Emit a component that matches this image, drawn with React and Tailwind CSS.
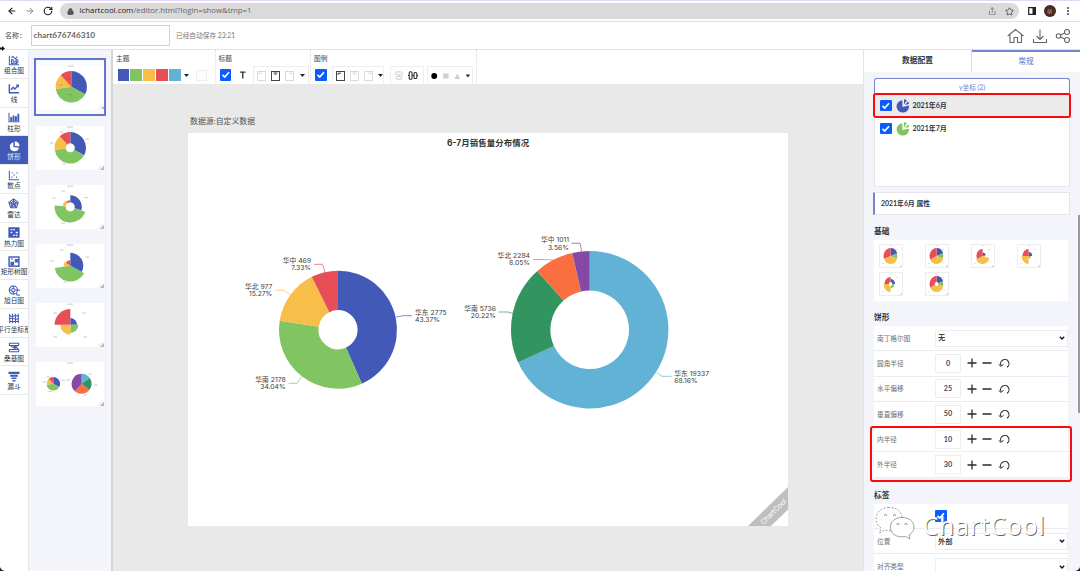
import React from "react";
import { ArrowLeft, ArrowRight, RotateCw, Lock, Star, Share } from "lucide-react";

const BLUE = "#4259b8", GREEN = "#81c563", YELLOW = "#f8be4a", RED = "#e84e55", SKY = "#62b2d6";
const FOREST = "#32945e", ORANGE = "#fa6f42", PURPLE = "#8549a5";

function sector(cx, cy, inner, r, from, to) {
  const p = (rad, a) => {
    const t = ((a - 90) * Math.PI) / 180;
    return (cx + rad * Math.cos(t)).toFixed(2) + " " + (cy + rad * Math.sin(t)).toFixed(2);
  };
  const big = to - from > 180 ? 1 : 0;
  return `M${p(inner, from)}L${p(r, from)}A${r} ${r} 0 ${big} 1 ${p(r, to)}L${p(inner, to)}A${inner} ${inner} 0 ${big} 0 ${p(inner, from)}Z`;
}

/* slices: [end angle, colour, radius] */
function Pie({ cx, cy, inner = 0, slices }) {
  let from = 0;
  return (
    <g>
      {slices.map(([to, color, r], i) => {
        const d = sector(cx, cy, inner, r, from, to);
        from = to;
        return <path key={i} d={d} fill={color} />;
      })}
    </g>
  );
}

const full = [[118, BLUE, 15.7], [262, GREEN, 15.7], [318, YELLOW, 15.7], [360, RED, 15.7]];
const thumbs = [
  { pies: [{ slices: full }], ticks: [[41, 17.5], [33, 29.5], [24, 20], [31, 13.5]] },
  { pies: [{ inner: 4.5, slices: full }], ticks: [[51, 13], [28, 38], [15.5, 17], [25.5, 6]] },
  { pies: [{ inner: 4.5, slices: [[108, BLUE, 11.5], [275, GREEN, 15.7], [325, YELLOW, 7.7], [360, RED, 6.5]] }], ticks: [[50, 12.5], [27, 38], [18, 13], [27, 6]] },
  { pies: [{ slices: [[118, BLUE, 13], [262, GREEN, 15.7], [305, YELLOW, 6.7], [360, RED, 5.5]] }], ticks: [[51, 13], [29, 38], [15.5, 17], [25.5, 6]] },
  { pies: [{ slices: [[90, BLUE, 6.7], [180, GREEN, 8], [270, YELLOW, 10], [360, RED, 15.7]] }], ticks: [[48, 10], [49, 34], [19, 34], [19, 10]] },
  {
    pies: [
      { cx: 17.3, slices: full.map(([a, c]) => [a, c, 6.7]) },
      { cx: 45.6, slices: [[55, SKY, 10], [130, FOREST, 10], [222, ORANGE, 10], [360, PURPLE, 10]] },
    ],
    ticks: [[27, 18], [14, 29.5], [8, 20], [12, 15], [32, 18], [54, 12], [59.5, 23], [49, 33]],
  },
];

function Thumb({ pies, ticks }) {
  return (
    <svg className="block h-11 w-[68px] bg-white" viewBox="0 0 68 44">
      <rect x="31" y="0.6" width="6" height="1" fill="#c9c9c9" />
      {pies.map((p, i) => <Pie key={i} cx={p.cx || 34.3} cy={21.8} inner={p.inner} slices={p.slices} />)}
      {ticks.map(([x, y], i) => <rect key={i} x={x - 1.5} y={y - 0.5} width="3.4" height="1.1" fill="#555" opacity="0.3" />)}
      <path d="M68 40L64 44h4zM66 39.5l-4 4" fill="#bbb" stroke="#bbb" strokeWidth=".5" />
    </svg>
  );
}

const navIcons = {
  combo: <path d="M1.500 1v10.500H13M4 10V5.500h2V10zM8 10V7h2v3zM4 3.500l1.500-2 3 3L11 2M8.500 4.500L11.500 6V10" />,
  line: <path d="M1.500 1.500v10H13M3.500 8L6 5l2 2 4-4M9.500 2.500H12V5" strokeWidth="1.700" />,
  bar: <g fill="currentColor" stroke="none"><path d="M0.500 1h1.200v11H0.500zM0.500 11h13v1.200H.500zM2.600 6h2.200v4.500H2.600zM5.400 4h2.200v6.500H5.400zM8.200 5h2.200v5.500H8.200zM11 2h2.200v8.500H11z" /></g>,
  pie: <g fill="currentColor" stroke="none"><path d="M6.300 1.500a5.400 5.400 0 1 0 6.500 6.500L6.300 7.200zM8 .3v5.500l5.500.5A5.600 5.600 0 0 0 8 .3z" /></g>,
  scatter: <g><path d="M1.500 1v10.500H13" /><path d="M4 8.500h1.300M6.500 6h1.300M9.500 8.500h1.300M10 3.500h1.300M5 3.500h1" strokeWidth="1.400" /></g>,
  radar: <path d="M6.500 1L12 5.200 10 11.500H3L1 5.200zM6.500 3.500L9.800 6 8.500 9.800h-4L3.300 6zM6.500 1v6M12 5.200L6.500 7 10 11.500M1 5.200L6.500 7 3 11.500" />,
  heat: <g><rect x="1" y="1" width="12" height="11" fill="currentColor" /><path d="M3 3.200h2M6 3.200h2M9 6.500h2.500M3 6.500h2M6 9.800h2M9 9.800h2" stroke="white" strokeWidth="1.500" /></g>,
  tree: <g><rect x="1.200" y="1.200" width="11.600" height="10.800" strokeWidth="1.700" /><path d="M3.500 3.500h2.500M8.500 4h3v3h-3zM3.500 7.500h3v3h-3z" fill="currentColor" /></g>,
  sun: <g><circle cx="6.200" cy="6" r="4.800" /><circle cx="6.200" cy="6" r="2" /><path d="M6.200 1v3M1 6h3M6.200 8v3M8.500 6H13M9.500 9.500a3 3 0 1 0 2.500-3.500" /></g>,
  parallel: <path d="M2 1v11M5.300 1v11M8.700 1v11M12 1v11M1 3l4 1 3.500-1L13 4M1 7l4-1 3.500 1.500L13 7M1 10h12" />,
  sankey: <path d="M1.500 1.500h11v2.500H1.500zM1.500 9h11v2.500H1.500zM2 4l8 5M5 4l7 4M12 4L7 6.500" />,
  funnel: <g fill="currentColor" stroke="none"><path d="M0.500 1h13v2.500H.500zM2.500 4.500h9v2.200h-9zM4 7.700h6v1.900H4zM5.300 10.600h3.400v1.900H5.300z" /></g>,
};
const nav = [["combo", "组合图"], ["line", "线"], ["bar", "柱形"], ["pie", "饼形"], ["scatter", "散点"], ["radar", "雷达"], ["heat", "热力图"], ["tree", "矩形树图"], ["sun", "旭日图"], ["parallel", "平行坐标系"], ["sankey", "桑基图"], ["funnel", "漏斗"]];

function Check({ className = "" }) {
  return (
    <span className={"block size-[11.500px] shrink-0 rounded-[1px] bg-[#0b5cff] " + className}>
      <svg viewBox="0 0 12 12" className="block size-full"><path d="M2.600 6.200L4.900 8.500L9.400 3.300" fill="none" stroke="white" strokeWidth="1.700" /></svg>
    </span>
  );
}
const Caret = () => <svg viewBox="0 0 5 3" className="block h-[3px] w-[5px] shrink-0"><path d="M0 0h5L2.500 3z" fill="#1d2b38" /></svg>;
function Pos({ at, on }) {
  return (
    <svg viewBox="0 0 9 10" className="block h-2.5 w-[9px] shrink-0" fill="none" stroke={on ? "#444" : "#dadada"}>
      <rect x=".5" y=".5" width="8" height="9" />
      <path d={at === "c" ? "M2.500 2h4M3.500 3.200h2" : at === "l" ? "M2 4V2.200h3" : "M4 2.200h3V4"} />
    </svg>
  );
}

function Toolbar() {
  const box = "flex h-[18px] items-center border border-b-0 border-[#eeeeee]";
  const group = "flex h-[34px] shrink-0 flex-col border-r border-dotted border-[#dcdcdc]";
  const head = "flex h-4 items-center text-[6.700px] text-[#34424e]";
  return (
    <div className="flex h-[34px] bg-white">
      <div className={group + " w-[103px] pl-[3px]"}>
        <div className={head}>主题</div>
        <div className="flex h-[18px] items-center pl-[1.500px]">
          <div className="flex gap-[1.700px]">
            <i className="size-[11.300px] bg-[#4259b8]" /><i className="size-[11.300px] bg-[#81c563]" /><i className="size-[11.300px] bg-[#f8be4a]" /><i className="size-[11.300px] bg-[#e84e55]" /><i className="size-[11.300px] bg-[#62b2d6]" />
          </div>
          <span className="ml-[3.500px]"><Caret /></span>
          <i className="ml-[7px] size-[11px] border border-[#eeeeee]" />
        </div>
      </div>
      <div className={group + " w-[95px] pl-[2.500px]"}>
        <div className={head}>标题</div>
        <div className="flex h-[18px] items-center pl-[1px]">
          <Check />
          <svg viewBox="0 0 8 8" className="ml-[7.500px] size-[7.500px]"><path d="M1 1.200h6M4 1v7" stroke="#3a3a3a" strokeWidth="1.500" /></svg>
          <div className={box + " ml-[7px] w-[56px] gap-[5.200px] pl-[3px]"}><Pos at="l" /><Pos at="c" on /><Pos at="r" /><Caret /></div>
        </div>
      </div>
      <div className={group + " w-[166px] pl-[3px]"}>
        <div className={head}>图例</div>
        <div className="flex h-[18px] items-center pl-[1px]">
          <Check />
          <div className={box + " ml-[5px] w-[52px] gap-[5.200px] pl-[3px]"}><Pos at="l" on /><Pos at="c" /><Pos at="r" /><Caret /></div>
          <div className={box + " ml-[6px] w-[34px] gap-[5px] pl-[4px]"}>
            <svg viewBox="0 0 8 9" className="h-[9px] w-2" fill="none" stroke="#d0d0d0"><rect x=".5" y="1" width="7" height="2.700" rx="1" /><rect x="1" y="5.500" width="6" height="2.700" rx="1" /><path d="M4 0v1M4 3.700v1.800M4 8v1" /></svg>
            <svg viewBox="0 0 10 9" className="h-[9px] w-2.5" fill="none" stroke="#333" strokeWidth="1.100"><rect x="1.200" y=".8" width="2.800" height="7.400" rx="1" /><rect x="6" y="1.500" width="2.800" height="6" rx="1" /><path d="M0 4.500h1.200M4 4.500h2M8.800 4.500H10" /></svg>
          </div>
          <div className={box + " ml-[3px] w-[46px] pl-[3px]"}>
            <svg viewBox="0 0 42 8" className="h-2 w-[42px]"><circle cx="3.300" cy="4" r="3" fill="#000" /><path d="M12.500 1.500h5.500V6.500h-5.500zM24 7L27 1.500 30 7z" fill="#cfcfcf" /><path d="M35.500 2.500h4.600l-2.300 3z" fill="#1d2b38" /></svg>
          </div>
        </div>
      </div>
    </div>
  );
}

/* name, share, anchor x, anchor y, alignment, leader line, colour */
const labels = [
  ["华中 469", "7.33%", 311, 261, "end", "314,264.300 322.500,264.300 325,272", RED],
  ["华北 977", "15.27%", 272.3, 287, "end", "275.500,290.300 284,290.300 291,295", YELLOW],
  ["华东 2775", "43.37%", 415, 313, "start", "396.500,317 403,315.700 412,315.700", BLUE],
  ["华南 2178", "34.04%", 285.7, 379.7, "end", "288.500,383.300 297,383.300 302,376.500", GREEN],
  ["华中 1011", "3.56%", 569, 240.3, "end", "571.500,243.300 580,243.300 581.500,251", PURPLE],
  ["华北 2284", "8.05%", 530, 256, "end", "533,259.500 544,259.500 554,260", ORANGE],
  ["华南 5736", "20.22%", 496, 309, "end", "498.500,312 508,312 513,313.500", FOREST],
  ["华东 19337", "68.16%", 674.3, 373.5, "start", "656.500,372.500 662,376.300 671.500,376.300", SKY],
];

function Chart() {
  return (
    <svg className="block h-[393px] w-[600px] bg-white font-['Inter','Noto_Sans_CJK_SC',sans-serif]" viewBox="188 133 600 393">
      <text x="488" y="146" textAnchor="middle" fontSize="8.400" fontWeight="700" fill="#333" textLength="82">6-7月销售量分布情况</text>
      <Pie cx={338} cy={329.7} inner={19.6} slices={[[156.1, BLUE, 59], [278.7, GREEN, 59], [333.6, YELLOW, 59], [360, RED, 59]]} />
      <Pie cx={589.7} cy={329.7} inner={39.3} slices={[[245.4, SKY, 78.7], [318.2, FOREST, 78.7], [347.2, ORANGE, 78.7], [360, PURPLE, 78.7]]} />
      {labels.map(([name, pct, x, y, anchor, line, color]) => (
        <g key={name} fontSize="6.800" fill="#3c3c3c" textAnchor={anchor}>
          <polyline points={line} fill="none" stroke={color} strokeWidth=".7" />
          <text x={x} y={y + 2}>{name}</text>
          <text x={x} y={y + 9.2}>{pct}</text>
        </g>
      ))}
      <path d="M748 526L788 487v22.500L771 526z" fill="#bfbfbf" />
      <text transform="translate(763.500 525) rotate(-45)" fontSize="7.200" fill="#fff" textLength="33">ChartCool</text>
    </svg>
  );
}

const basics = [
  { slices: [[70, BLUE, 8], [110, GREEN, 7.5], [250, YELLOW, 8], [360, RED, 8]] },
  { slices: [[70, BLUE, 8], [110, GREEN, 7.5], [245, YELLOW, 8], [360, RED, 8]] },
  { slices: [[80, BLUE, 3.5], [105, GREEN, 2], [245, YELLOW, 8], [360, RED, 7]] },
  { slices: [[90, BLUE, 4], [180, GREEN, 2.500], [270, YELLOW, 8], [360, RED, 7]] },
  { inner: 2, slices: [[90, BLUE, 5], [180, GREEN, 4], [270, YELLOW, 8], [360, RED, 7]] },
  { inner: 2, slices: [[70, BLUE, 8], [110, GREEN, 7.5], [245, YELLOW, 8], [360, RED, 8]] },
];

function Row({ label, children }) {
  return (
    <div className="flex h-[25.300px] shrink-0 items-center border-b border-[#ececf0] bg-white pl-[3px]">
      <div className="w-[58px] shrink-0 text-[6.700px] text-[#6b7075]">{label}</div>
      {children}
    </div>
  );
}
function NumberRow({ label, value }) {
  return (
    <Row label={label}>
      <div className="flex h-[19px] w-[26px] items-center justify-center border border-[#eeeeee] text-[7.200px] font-bold text-[#3b4b5b]">{value}</div>
      <svg viewBox="0 0 44 12" className="ml-[6px] h-3 w-11" fill="none" stroke="#2a2a2a" strokeWidth="1.300">
        <path d="M0.500 6h9M5 1.500v9M15.500 6h9" />
        <path d="M40 10.200A4.200 4.200 0 1 0 34 8.500" strokeWidth="1.100" />
        <path d="M31.700 7.300L33.800 9.300L36.500 7.500" strokeWidth="1" />
      </svg>
    </Row>
  );
}
function SelectRow({ label, value }) {
  return (
    <Row label={label}>
      <div className="flex h-[17px] flex-1 items-center justify-between border border-[#eeeeee] px-[2px] text-[7.300px] font-medium text-[#222]">
        <span>{value}</span>
        <svg viewBox="0 0 6 4" className="h-1 w-1.5" fill="none" stroke="#111" strokeWidth="1.300"><path d="M.8.800L3 3 5.200.800" /></svg>
      </div>
    </Row>
  );
}
function Series({ color, label, active }) {
  return (
    <div className={"flex h-[23px] items-center pl-[6px] " + (active ? "bg-[#ebebeb]" : "")}>
      <Check />
      <svg viewBox="0 0 14 14" className="ml-[4px] size-[14px]">
        <path d="M6.300 1.200A6.200 6.200 0 1 0 12.900 6.500L6.500 8zM8 .300L8 5.500L10.800 1.300A6 6 0 0 0 8 .300zM12 2.200L9 6L13 5A6 6 0 0 0 12 2.200z" fill={color} />
      </svg>
      <span className="ml-[3px] text-[7px] font-bold text-[#26384a]">{label}</span>
    </div>
  );
}
const Heading = ({ children, className }) => <div className={"flex shrink-0 items-center text-[7.700px] font-bold text-[#333] " + className}>{children}</div>;

function SidePanel() {
  return (
    <aside className="relative flex w-[217px] shrink-0 flex-col overflow-hidden border-l border-[#e2e3e6] bg-[#f4f5fa]">
      <div className="flex h-[22px] shrink-0 bg-white text-[7.700px]">
        <div className="flex w-[108px] items-center justify-center border-r border-[#dcdcdc] font-bold text-[#26384a]">数据配置</div>
        <div className="flex flex-1 items-center justify-center border-t-2 border-[#7384cf] text-[#5b6fc5]">常规</div>
      </div>
      <div className="mt-1.5 ml-[10px] h-[109px] w-[196px] shrink-0 rounded-t-[3px] border border-[#e6e6ea] bg-white">
        <div className="-mx-px -mt-px flex h-[17px] items-center justify-center rounded-t-[3px] border border-b-0 border-[#7384cf] text-[6.700px] text-[#6c7dcc]">y坐标 (2)</div>
        <div className="-mx-px -mt-px overflow-hidden rounded-[2px] outline-2 -outline-offset-1 outline-[#fa0b0b]"><Series color={BLUE} label="2021年6月" active /></div>
        <div className="-ml-px"><Series color="#81c563" label="2021年7月" /></div>
      </div>
      <div className="mt-[5px] ml-[9px] flex h-[23px] w-[197px] shrink-0 items-center border border-l-2 border-[#e6e6ea] border-l-[#7384cf] bg-white pl-[6px] text-[6.900px] font-bold text-[#26384a]">2021年6月 属性</div>
      <Heading className="mt-[12px] ml-[10px] h-[10px]">基础</Heading>
      <div className="mt-[3px] ml-[10px] grid h-[61px] w-[194px] shrink-0 grid-cols-[46px_46px_46px_46px] content-start gap-y-[4px] bg-white pt-[4px] pl-[5px]">
        {basics.map((b, i) => (
          <svg key={i} viewBox="1 1 22 22" className="size-6 border border-[#ededf0]">
            <g transform="translate(1.500 0) scale(.88 1)"><Pie cx={11.500} cy={12} inner={b.inner} slices={b.slices} /></g>
            <path d="M10.500 2h3M17 5.500h2M3 19.500h2M19 18h1" stroke="#ccc" strokeWidth=".6" />
            <path d="M22.500 21v1.500H21z" fill="#999" />
          </svg>
        ))}
      </div>
      <Heading className="mt-[12px] ml-[10px] h-[10px]">饼形</Heading>
      <div className="mt-[3px] ml-[10px] flex w-[194px] shrink-0 flex-col">
        <SelectRow label="南丁格尔图" value="无" />
        <NumberRow label="圆角半径" value="0" />
        <NumberRow label="水平偏移" value="25" />
        <NumberRow label="垂直偏移" value="50" />
        <div className="relative">
          <NumberRow label="内半径" value="10" />
          <NumberRow label="外半径" value="30" />
          <div className="absolute -top-px -right-1 -bottom-1 -left-1 rounded-[3px] border-2 border-[#fa0b0b]" />
        </div>
      </div>
      <Heading className="mt-[13px] ml-[10px] h-[10px]">标签</Heading>
      <div className="mt-[3px] ml-[10px] flex w-[194px] shrink-0 flex-col">
        <Row label="显示"><Check /></Row>
        <SelectRow label="位置" value="外部" />
        <SelectRow label="对齐类型" value="" />
      </div>
      <div className="absolute top-[165px] right-0 h-[198px] w-[2px] bg-[#9a9a9a]" />
      <svg className="absolute top-[455px] left-[8px] h-[40px] w-[182px]" viewBox="872 505 182 40">
        <g fill="#fff" fillOpacity=".92" stroke="#8a8a8a" strokeWidth=".8">
          <path d="M889 507.500c-8 0-13 5-13 11.500 0 4 2 7 5 9l-1.500 5 5.500-3c10 3 17-3 17-11s-5-11.500-13-11.500z" strokeDasharray="2 1.500" />
          <path d="M902 517.500c-7 0-11.500 4-11.500 9.500 0 7 6 11 15 9.500l4.500 2.500-1-4c3-2 5-4.500 5-8 0-5.500-5-9.500-12-9.500z" />
        </g>
        <path d="M884 515.500q1.500-2 3 0M893 515.500q1.500-2 3 0M896.500 524.500q1.500-2 3 0M904.500 524.500q1.500-2 3 0" fill="none" stroke="#777" />
        <text className="font-['Noto_Sans',sans-serif] [text-shadow:0.8px_0.8px_0.5px_#666]" x="922.700" y="535.300" fontSize="24.500" textLength="122" fill="#fff">ChartCool</text>
      </svg>
    </aside>
  );
}

export default function App() {
  return (
    <div className="relative flex h-[571px] w-[1080px] flex-col overflow-hidden bg-white font-['Lato','Noto_Sans_CJK_SC',sans-serif] leading-none whitespace-nowrap">
      <div className="flex h-[22px] shrink-0 items-center border-t border-b border-t-[#e6d6fb] border-b-[#dfdfdf] pl-[7px] text-[#222]">
        <ArrowLeft size={10} strokeWidth={2.600} />
        <ArrowRight size={10} strokeWidth={2.400} className="ml-2 text-[#888]" />
        <RotateCw size={10} strokeWidth={2.800} className="ml-2" />
        <div className="ml-[7px] flex h-4 w-[959px] items-center rounded-full bg-[#dadada] pl-[7px] font-['Open_Sans',sans-serif] text-[7.850px] text-[#666]">
          <Lock size={7} strokeWidth={3} fill="#555" color="#555" />
          <span className="ml-[5.500px]"><span className="text-[#222]">ichartcool.com</span>/editor.html?login=show&amp;tmp=1</span>
          <Share size={8.500} strokeWidth={2} className="ml-auto" />
          <Star size={9} strokeWidth={2.200} className="mr-[5px] ml-[9px] text-[#444]" />
        </div>
        <svg viewBox="0 0 8 8" className="ml-[8.500px] size-2"><path d="M.700.700h6.600v6.600H.700z" fill="none" stroke="#222" strokeWidth="1.200" /><path d="M4.500 0H8v8H4.500z" fill="#222" /></svg>
        <div className="ml-2 flex size-3 items-center justify-center rounded-full bg-[#4a2925] text-[5px] text-[#c9aaa0]">创</div>
        <svg viewBox="0 0 2 8" className="ml-[11px] h-2 w-0.5" fill="#333"><circle cx="1" cy="1" r=".9" /><circle cx="1" cy="4" r=".9" /><circle cx="1" cy="7" r=".9" /></svg>
      </div>
      <header className="flex h-[28px] shrink-0 items-center border-b border-[#e4e4e4] pl-[5px]">
        <div className="w-[26px] text-[7px] text-[#444]">名称：</div>
        <div className="flex h-[21px] w-[139px] items-center border border-[#d2d2d2] pl-[1.500px] text-[8.200px] font-bold text-[#666]">chart676746310</div>
        <div className="ml-[6px] text-[6.700px] text-[#777]">已经自动保存 23:21</div>
        <svg viewBox="0 0 64 16" className="mr-[9px] ml-auto h-4 w-16" fill="none" stroke="#666" strokeWidth="1.100">
          <path d="M.700 8L8.500 1.500 16.500 8M3 6.500V14.500h4v-5h3.500v5h4V6.500" />
          <path d="M33 1.500v10M29.500 8L33 11.500l3.500-3.500M26.500 11V14.500h13v-3.500" />
          <circle cx="51.500" cy="8" r="2.200" /><circle cx="60" cy="4" r="2.500" /><circle cx="60" cy="12" r="2.500" /><path d="M53.500 7l4.200-2M53.500 9l4.200 2" />
        </svg>
      </header>
      <div className="flex min-h-0 flex-1">
        <nav className="w-[29px] shrink-0 border-r border-[#e8e8ec]">
          {nav.map(([icon, label]) => (
            <div key={label} className={"flex h-[28.750px] flex-col items-center overflow-hidden border-b border-[#e8e8e8] pt-[4.500px] " + (icon === "pie" ? "bg-[#4259b8] text-white" : "text-[#4259b8]")}>
              <svg viewBox="0 0 14 13" className="h-[11px] w-[12px] shrink-0" fill="none" stroke="currentColor" strokeWidth="1.200">{navIcons[icon]}</svg>
              <span className={"mt-[1.500px] text-[6.700px] leading-[7px] " + (icon === "pie" ? "text-[#e8ebff]" : "text-[#26343f]")}>{label}</span>
            </div>
          ))}
        </nav>
        <div className="flex w-[84px] shrink-0 flex-col items-center border-r-2 border-[#d4d5d9] bg-[#f4f5fa] pt-[9px]">
          {thumbs.map((t, i) => i === 0 ? (
            <div key={i} className="mb-[10.700px] flex h-[56px] w-[70px] shrink-0 items-start justify-center border-[1.500px] border-[#6075cb] bg-[#f9fafd] pt-[5px] outline-[0.500px] outline-[#6075cb]"><div className="w-[67px] overflow-hidden"><Thumb {...t} /></div></div>
          ) : (
            <div key={i} className="mb-[15.100px] shrink-0"><Thumb {...t} /></div>
          ))}
        </div>
        <main className="flex w-[750px] shrink-0 flex-col bg-[#e9e9e9]">
          <Toolbar />
          <div className="flex flex-1 flex-col pt-[33px] pl-[75px]">
            <div className="mb-[8px] pl-[2px] text-[7.900px] leading-[8px] text-[#555]">数据源:自定义数据</div>
            <Chart />
          </div>
        </main>
        <SidePanel />
      </div>
      <svg className="absolute top-[45px] left-0 h-[7px] w-[5px]" viewBox="0 0 5 7"><path d="M0 2.500h2V1l3 2.500L2 6V4.500H0z" fill="#111" /></svg>
      <svg className="absolute bottom-0 left-0 size-[5px]" viewBox="0 0 5 5"><path d="M0 1Q1 4.500 5 5H0z" fill="#1c1a2c" /></svg>
      <svg className="absolute right-0 bottom-0 size-[5px]" viewBox="0 0 5 5"><path d="M5 1Q4 4.500 0 5h5z" fill="#1c1a2c" /></svg>
    </div>
  );
}
